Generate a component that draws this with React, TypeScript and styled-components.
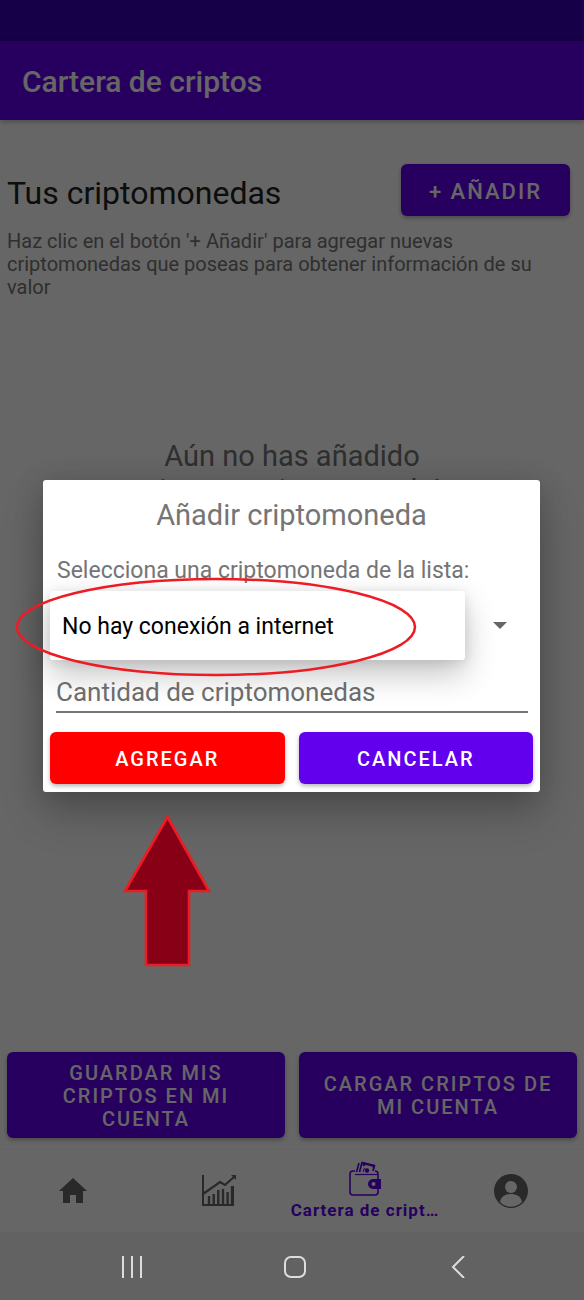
import React from "react";
import styled, { createGlobalStyle } from "styled-components";

const GlobalStyle = createGlobalStyle`
  *, *::before, *::after { box-sizing: border-box; }
  body { margin: 0; background: #fff; font-family: Roboto, sans-serif; }
  h1, h2, p { margin: 0; font-weight: 400; }
`;

const Screen = styled.div`
  position: relative;
  display: flex;
  flex-direction: column;
  min-height: 100vh;
  background: #fff;
`;

const StatusBar = styled.div`
  height: 41px;
  background: #3700b3;
`;

const AppBar = styled.header`
  display: flex;
  align-items: center;
  height: 79px;
  padding: 2px 22px 0;
  background: #6200ee;
  color: #fff;
  box-shadow: 0 2px 5px rgba(0, 0, 0, 0.25);
`;

const AppTitle = styled.h1`
  && { font-weight: 500; }
  font-size: 30px;
  line-height: 36px;
`;

const Content = styled.main`
  display: flex;
  flex-direction: column;
  flex: 1;
  padding: 44px 7px 12px;
`;

const HeadingRow = styled.div`
  display: flex;
  justify-content: space-between;
  align-items: center;
  padding-right: 7px;
`;

const Heading = styled.h2`
  padding-top: 6px;
  font-size: 32px;
  line-height: 38px;
  color: #212121;
`;

const Hint = styled.p`
  margin-top: 14px;
  padding-right: 24px;
  font-size: 20px;
  line-height: 23px;
  color: #757575;
`;

const EmptyState = styled.p`
  flex: 1;
  align-self: center;
  width: 300px;
  padding-top: 140px;
  font-size: 29px;
  line-height: 34px;
  text-align: center;
  color: #757575;
`;

const Button = styled.button<{ $tone?: "red"; $tall?: boolean; $large?: boolean }>`
  min-height: ${(p) => (p.$tall ? 86 : 52)}px;
  padding: 2px ${(p) => (p.$large ? 28 : 24)}px 0;
  border: 0;
  border-radius: 6px;
  background: ${(p) => (p.$tone === "red" ? "#ff0000" : "#6200ee")};
  box-shadow: 0 2px 4px rgba(0, 0, 0, 0.3);
  color: #fff;
  font-family: inherit;
  font-size: ${(p) => (p.$large ? 22 : 20)}px;
  font-weight: 500;
  line-height: 23px;
  letter-spacing: 2px;
  text-transform: uppercase;
`;

const ButtonPair = styled.div`
  display: grid;
  grid-template-columns: 1fr 1fr;
  gap: 14px;
`;

const Tabs = styled.nav`
  display: grid;
  grid-template-columns: repeat(4, 1fr);
  height: 82px;
  background: #fff;
  box-shadow: 0 -1px 2px rgba(0, 0, 0, 0.04);
`;

const Tab = styled.a`
  display: flex;
  flex-direction: column;
  align-items: center;
  justify-content: center;
  gap: 2px;
  min-width: 0;
  color: ${(p) => (p["aria-current"] ? "#6200ee" : "#666")};
  font-size: 17px;
  font-weight: 700;
  line-height: 22px;
  letter-spacing: 1px;
  text-decoration: none;
`;

const TabLabel = styled.span`
  white-space: nowrap;
`;

const SystemBar = styled.div`
  position: relative;
  z-index: 2;
  display: flex;
  justify-content: space-around;
  align-items: center;
  height: 68px;
  padding: 2px 45px 0 50px;
  background: #626262;
`;

const SystemButton = styled.button`
  display: flex;
  padding: 0;
  border: 0;
  background: none;
  color: #ddd;
`;

const Scrim = styled.div`
  position: absolute;
  inset: 0;
  z-index: 1;
  padding: 480px 44px 0 43px;
  background: rgba(0, 0, 0, 0.6);
`;

const Dialog = styled.form`
  padding: 16px 7px 8px;
  border-radius: 3px;
  background: #fff;
  box-shadow: 0 22px 44px rgba(0, 0, 0, 0.2), 0 4px 30px rgba(0, 0, 0, 0.16);
`;

const DialogTitle = styled.h2`
  padding-top: 1px;
  font-size: 29px;
  line-height: 36px;
  text-align: center;
  color: #757575;
`;

const FieldLabel = styled.label`
  display: block;
  margin-top: 24px;
  padding-left: 7px;
  font-size: 23px;
  line-height: 28px;
  color: #757575;
`;

const PickerRow = styled.div`
  display: flex;
  align-items: center;
  margin-top: 6px;
  padding-right: 25px;
`;

const Picker = styled.select`
  flex: 1;
  min-width: 0;
  height: 69px;
  margin-right: 27px;
  padding: 2px 12px 0;
  border: 0;
  border-radius: 3px;
  appearance: none;
  background: #fff;
  box-shadow: 0 14px 32px rgba(0, 0, 0, 0.24), 0 2px 12px rgba(0, 0, 0, 0.1);
  color: #000;
  font-family: inherit;
  font-size: 23px;
`;

const Amount = styled.input`
  position: relative;
  display: block;
  width: calc(100% - 11px);
  height: 40px;
  margin: 13px 5px 19px 6px;
  padding: 0;
  border: 0;
  border-bottom: 2px solid #757575;
  border-radius: 0;
  background: transparent;
  font-family: inherit;
  font-size: 26px;
  &::placeholder { color: #6c6c6c; opacity: 1; }
`;

const Highlight = styled.svg`
  position: absolute;
  left: 15px;
  top: 577px;
`;

const Pointer = styled.svg`
  position: absolute;
  left: 122px;
  top: 814px;
`;

const HomeIcon = () => (
  <svg width="28" height="26" viewBox="0 0 28 26" fill="currentColor" aria-hidden="true">
    <path d="M14 0 28 13h-4v12h-7v-8h-6v8H4V13H0z" />
  </svg>
);

const ChartIcon = () => (
  <svg width="36" height="34" viewBox="0 0 36 34" fill="none" stroke="currentColor" aria-hidden="true">
    <path d="M2 1v30h30V12" strokeWidth="2" />
    <path d="M2 20 19 8l5 3 9-8" strokeWidth="2.200" />
    <path d="M30 1h5v5z" fill="currentColor" stroke="none" />
    <path d="M8 30v-8M12.700 30V20M17.300 30V16M22 30V15M26.600 30V18M31 30V12" strokeWidth="2.400" />
  </svg>
);

const WalletIcon = () => (
  <svg width="32" height="36" viewBox="0 0 32 36" fill="none" stroke="currentColor" aria-hidden="true">
    <path d="M6 10H4a3 3 0 0 0-3 3v18a3 3 0 0 0 3 3h22a3 3 0 0 0 3-3v-4M29 19v-6a3 3 0 0 0-3-3" strokeWidth="1.600" />
    <path d="M6 13.500h22" strokeWidth="1.200" />
    <path d="m7.500 11 2.500-9M10.500 11l2.500-9.500 12.500 3-1.500 5.500" strokeWidth="1.700" />
    <path d="m13 1 13 3-1 4-2-2.500-6-1.500-3 1.500z" fill="currentColor" stroke="none" />
    <path d="m14 11 1.500-4" strokeWidth="1" />
    <circle cx="18" cy="9.500" r="2.200" fill="currentColor" stroke="none" />
    <path fillRule="evenodd" d="M32 18h-8a5 5 0 0 0 0 10h8zm-7.500 3a2 2 0 1 1 0 4 2 2 0 0 1 0-4z" fill="currentColor" stroke="none" />
  </svg>
);

const ProfileIcon = () => (
  <svg width="36" height="36" viewBox="0 0 36 36" aria-hidden="true">
    <circle cx="18" cy="18" r="17" fill="currentColor" />
    <circle cx="18" cy="14" r="6" fill="#fff" />
    <path d="M7 29c1-6 6-8 11-8s10 2 11 8a15 15 0 0 1-22 0z" fill="#fff" />
  </svg>
);

export default function App() {
  return (
    <>
      <GlobalStyle />
      <Screen>
        <StatusBar />
        <AppBar>
          <AppTitle>Cartera de criptos</AppTitle>
        </AppBar>
        <Content>
          <HeadingRow>
            <Heading>Tus criptomonedas</Heading>
            <Button type="button" $large>+ Añadir</Button>
          </HeadingRow>
          <Hint>
            Haz clic en el botón '+ Añadir' para agregar nuevas criptomonedas que poseas para obtener
            información de su valor
          </Hint>
          <EmptyState>Aún no has añadido ninguna criptomoneda!</EmptyState>
          <ButtonPair>
            <Button type="button" $tall>Guardar mis criptos en mi cuenta</Button>
            <Button type="button" $tall>Cargar criptos de mi cuenta</Button>
          </ButtonPair>
        </Content>
        <Tabs>
          <Tab href="#inicio" aria-label="Inicio"><HomeIcon /></Tab>
          <Tab href="#mercado" aria-label="Mercado"><ChartIcon /></Tab>
          <Tab href="#cartera" aria-current="page">
            <WalletIcon />
            <TabLabel>Cartera de cript…</TabLabel>
          </Tab>
          <Tab href="#perfil" aria-label="Perfil"><ProfileIcon /></Tab>
        </Tabs>
        <SystemBar>
          <SystemButton type="button" aria-label="Recientes">
            <svg width="22" height="22" viewBox="0 0 22 22" stroke="currentColor" strokeWidth="2">
              <path d="M2 0v22M11 0v22M20 0v22" />
            </svg>
          </SystemButton>
          <SystemButton type="button" aria-label="Inicio">
            <svg width="22" height="22" viewBox="0 0 22 22" fill="none" stroke="currentColor" strokeWidth="2">
              <rect x="1" y="1" width="20" height="20" rx="6" />
            </svg>
          </SystemButton>
          <SystemButton type="button" aria-label="Atrás">
            <svg width="22" height="22" viewBox="0 0 22 22" fill="none" stroke="currentColor" strokeWidth="2">
              <path d="M17 0 6 11l11 11" />
            </svg>
          </SystemButton>
        </SystemBar>
        <Scrim>
          <Dialog role="dialog" aria-labelledby="dialog-title">
            <DialogTitle id="dialog-title">Añadir criptomoneda</DialogTitle>
            <FieldLabel htmlFor="coin">Selecciona una criptomoneda de la lista:</FieldLabel>
            <PickerRow>
              <Picker id="coin">
                <option>No hay conexión a internet</option>
              </Picker>
              <svg width="16" height="8" viewBox="0 0 16 8" aria-hidden="true">
                <path d="M1 0h14L8 7z" fill="#666" />
              </svg>
            </PickerRow>
            <Amount aria-label="Cantidad de criptomonedas" placeholder="Cantidad de criptomonedas" />
            <ButtonPair>
              <Button type="button" $tone="red">Agregar</Button>
              <Button type="button">Cancelar</Button>
            </ButtonPair>
          </Dialog>
          <Highlight width="402" height="100" viewBox="0 0 402 100" fill="none" aria-hidden="true">
            <ellipse cx="201" cy="50" rx="199" ry="48" stroke="#ed1c24" strokeWidth="2.500" />
          </Highlight>
          <Pointer width="90" height="154" viewBox="0 0 90 154" aria-hidden="true">
            <path d="M45.500 3 87 77H67v74H24V77H3z" fill="#880015" stroke="#ed1c24" strokeWidth="2.600" />
          </Pointer>
        </Scrim>
      </Screen>
    </>
  );
}
